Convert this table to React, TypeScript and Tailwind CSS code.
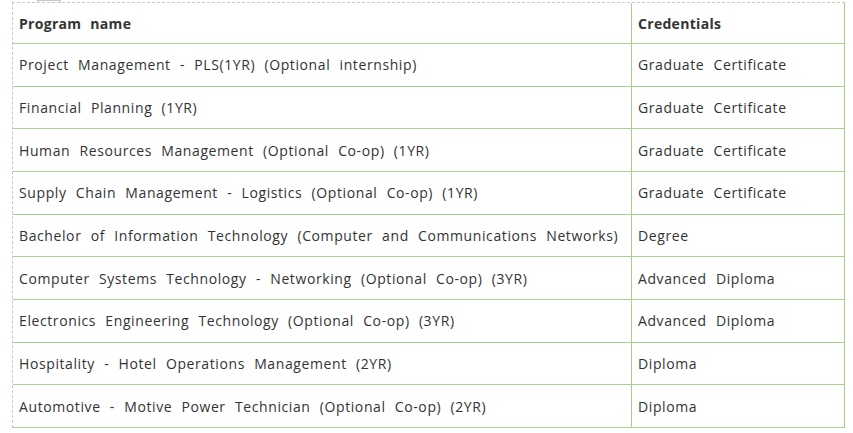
import React from 'react';

const rows: [string, string][] = [
  ['Project Management - PLS(1YR) (Optional internship)', 'Graduate Certificate'],
  ['Financial Planning (1YR)', 'Graduate Certificate'],
  ['Human Resources Management (Optional Co-op) (1YR)', 'Graduate Certificate'],
  ['Supply Chain Management - Logistics (Optional Co-op) (1YR)', 'Graduate Certificate'],
  ['Bachelor of Information Technology (Computer and Communications Networks)', 'Degree'],
  ['Computer Systems Technology - Networking (Optional Co-op) (3YR)', 'Advanced Diploma'],
  ['Electronics Engineering Technology (Optional Co-op) (3YR)', 'Advanced Diploma'],
  ['Hospitality - Hotel Operations Management (2YR)', 'Diploma'],
  ['Automotive - Motive Power Technician (Optional Co-op) (2YR)', 'Diploma'],
];

const App: React.FC = () => {
  return (
    <div className="relative min-h-[433px] bg-white pl-[12px] pt-[2px] font-['Open_Sans',sans-serif] text-[14px] tracking-[0.6px] text-[#333] [word-spacing:5px]">
      {/* little tab on top of the editor box */}
      <div className="absolute left-[37px] top-0 h-[3px] w-[24px] border-x border-t border-[#c8c8c8]" />
      <div className="w-[833px] border-l border-t border-dashed border-[#c8c8c8]">
        <div className="border-r border-[#a9d18e]">
          <div className="flex h-[41px] border-b border-[#a9d18e] font-bold tracking-[0.3px]">
            <div className="flex w-[619px] items-center border-r border-[#a9d18e] pl-[6px]">Program name</div>
            <div className="flex flex-1 items-center pl-[6px]">Credentials</div>
          </div>
          {rows.map(([name, cred]) => (
            <div key={name} className="flex h-[42.67px] border-b border-[#a9d18e]">
              <div className="flex w-[619px] items-center border-r border-[#a9d18e] pl-[6px]">{name}</div>
              <div className="flex flex-1 items-center pl-[6px]">{cred}</div>
            </div>
          ))}
        </div>
      </div>
    </div>
  );
};

export default App;
